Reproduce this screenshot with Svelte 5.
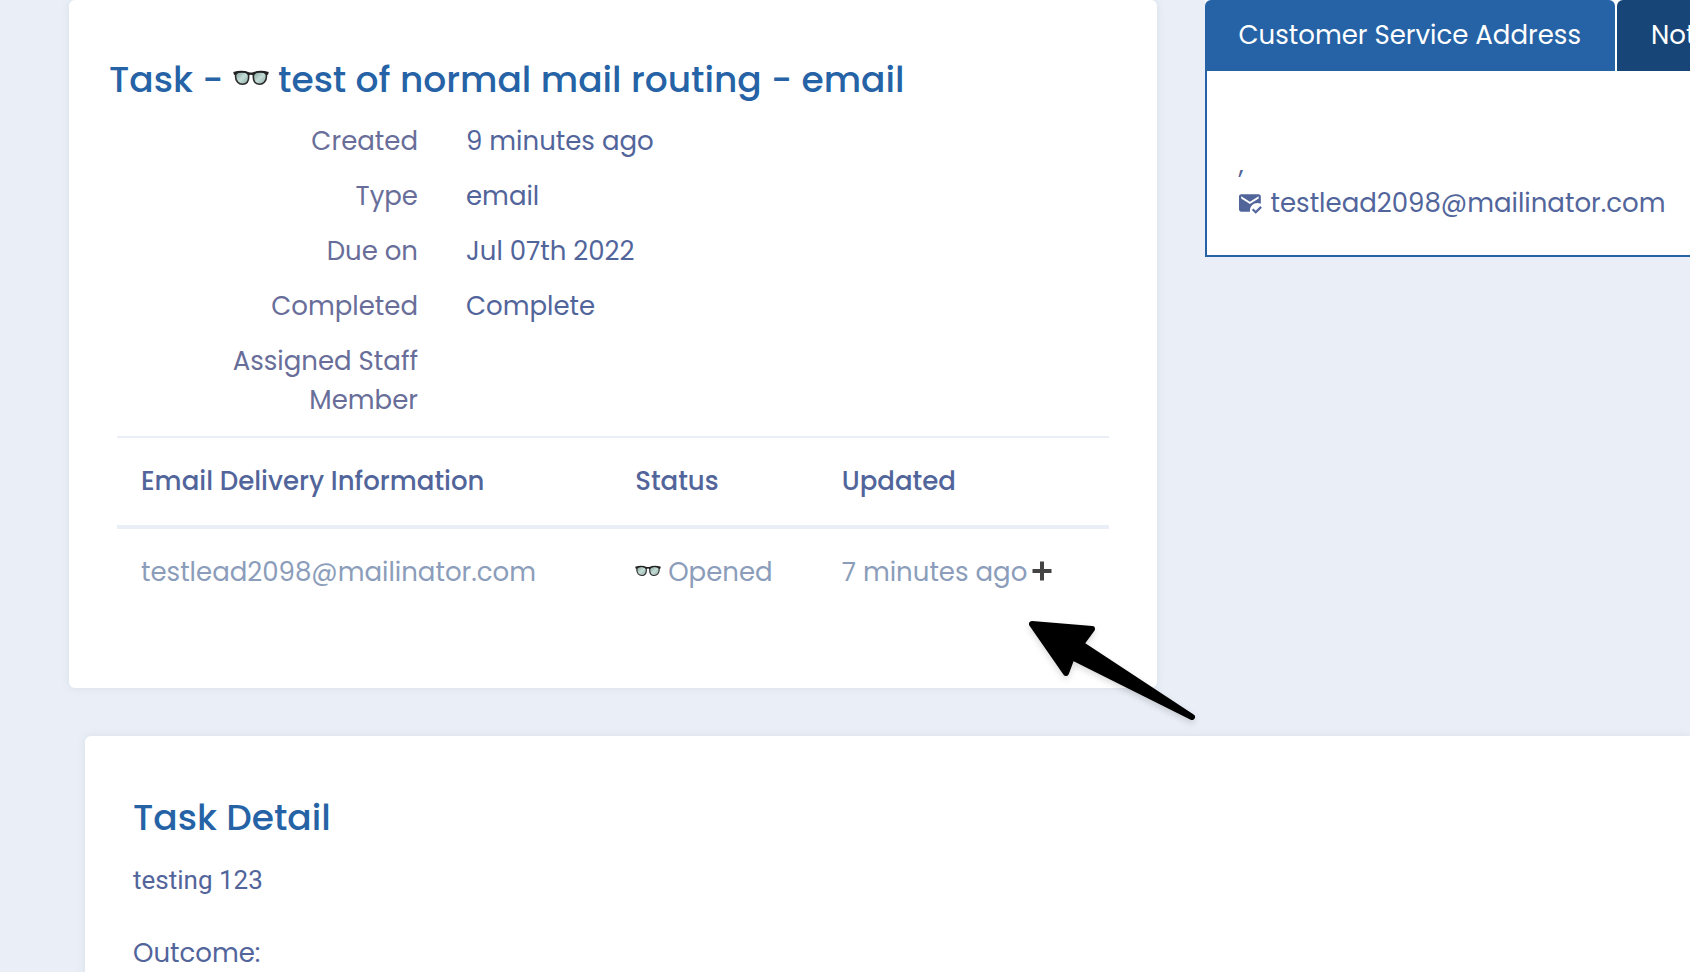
<script>
  const details = [
    { label: 'Created', value: '9 minutes ago' },
    { label: 'Type', value: 'email' },
    { label: 'Due on', value: 'Jul 07th 2022' },
    { label: 'Completed', value: 'Complete' },
    { label: 'Assigned Staff Member', value: '' },
  ];

  const deliveries = [
    { email: 'testlead2098@mailinator.com', status: 'Opened', updated: '7 minutes ago' },
  ];

  const tabs = ['Customer Service Address', 'Notes'];
  let activeTab = $state(0);
</script>

{#snippet glasses()}
  <svg class="glasses" viewBox="0 0 36 16" aria-hidden="true">
    <defs>
      <linearGradient id="lens" x1="0" y1="0" x2="1" y2="1">
        <stop offset="0" stop-color="#7f9f97" />
        <stop offset="0.5" stop-color="#c4dcd5" />
        <stop offset="1" stop-color="#8aaaa2" />
      </linearGradient>
    </defs>
    <path d="M2.500 6C2.500 2.500 5 1.800 9 1.800S15.700 3 15.700 6.500C15.700 11 13.500 14.200 9.500 14.200S2.500 11 2.500 6Z" fill="url(#lens)" stroke="#2b2b2b" stroke-width="1.600" />
    <path d="M33.500 6C33.500 2.500 31 1.800 27 1.800S20.300 3 20.300 6.500C20.300 11 22.500 14.200 26.500 14.200S33.500 11 33.500 6Z" fill="url(#lens)" stroke="#2b2b2b" stroke-width="1.600" />
    <path d="M0.300 2Q9-0.500 16 2.300Q18 2.900 20 2.300Q27-0.500 35.700 2L35.200 4.500L33.600 5.200Q32.500 2.600 27 2.600Q22 2.600 20.300 5.500Q18 3.800 15.700 5.500Q14 2.600 9 2.600Q3.500 2.600 2.400 5.200L0.800 4.500Z" fill="#222" />
  </svg>
{/snippet}

<div class="page">
  <div class="top">
    <section class="card task">
      <h1>Task - {@render glasses()} test of normal mail routing - email</h1>

      <dl>
        {#each details as { label, value }}
          <div class="detail">
            <dt>{label}</dt>
            <dd>{value}</dd>
          </div>
        {/each}
      </dl>

      <table>
        <thead>
          <tr>
            <th class="email">Email Delivery Information</th>
            <th class="status">Status</th>
            <th>Updated</th>
          </tr>
        </thead>
        <tbody>
          {#each deliveries as row}
            <tr>
              <td>{row.email}</td>
              <td><span class="opened">{@render glasses()}{row.status}</span></td>
              <td>
                <span class="updated">
                  {row.updated}
                  <button class="expand" aria-label="Show more">
                    <svg viewBox="0 0 20 20"><path d="M8 0.500h4v7.500h7.500v4h-7.500v7.500h-4v-7.500h-7.500v-4h7.500z" fill="#444" /></svg>
                  </button>
                </span>
              </td>
            </tr>
          {/each}
        </tbody>
      </table>

      <svg class="arrow" viewBox="0 0 176 112" aria-hidden="true">
        <path d="M7 8L67 13L56 28L167 101L47 41L41 57Z" />
      </svg>
    </section>

    <section class="side">
      <div class="tabs" role="tablist">
        {#each tabs as tab, i}
          <button role="tab" class:active={activeTab === i} aria-selected={activeTab === i} onclick={() => (activeTab = i)}>{tab}</button>
        {/each}
      </div>
      <div class="panel">
        <p>&nbsp;</p>
        <p>,</p>
        <p class="contact">
          <svg viewBox="2 2 22 22" aria-hidden="true">
            <path d="M12 19c0-3.870 3.130-7 7-7 1.080 0 2.090.250 3 .680V6c0-1.100-.900-2-2-2H4C2.900 4 2 4.900 2 6v12c0 1.100.900 2 2 2h8.080C12.030 19.670 12 19.340 12 19zM4 6l8 5 8-5v2l-8 5-8-5V6zM17.340 22l-3.540-3.540 1.410-1.410 2.120 2.120 4.240-4.240L23 16.340 17.340 22z" />
          </svg>
          testlead2098@mailinator.com
        </p>
      </div>
    </section>
  </div>

  <section class="card task-detail">
    <h2>Task Detail</h2>
    <p class="note">testing 123</p>
    <p>Outcome:</p>
  </section>
</div>

<style>
  :global(body) {
    overflow: hidden;
    background: #eaeff7;
  }

  .page {
    min-height: 100vh;
    color: #52659b;
    font-family: Poppins, Inter, sans-serif;
    font-size: 26px;
    line-height: 39px;
  }

  .top {
    display: grid;
    grid-template-columns: minmax(0, 56fr) minmax(0, 25fr);
    align-items: start;
    gap: 48px;
    padding-left: 69px;
  }

  .card {
    background: #fff;
    border-radius: 6px;
    box-shadow: 0 0 8px rgba(90, 110, 120, 0.12);
  }

  .task {
    position: relative;
    padding: 56px 48px 72px;
  }

  h1,
  h2 {
    margin: 0;
    color: #2663a6;
    font-size: 36px;
    font-weight: 500;
    line-height: 48px;
  }

  h1 {
    margin-left: -8px;
  }

  h1 .glasses {
    width: 36px;
    height: 16px;
    vertical-align: 6px;
  }

  dl {
    margin: 0;
    padding: 18px 0 16px 24px;
  }

  .detail {
    display: grid;
    grid-template-columns: 277px 1fr;
    gap: 48px;
  }

  .detail + .detail {
    margin-top: 16px;
  }

  dt {
    color: #686e99;
    text-align: right;
  }

  dd {
    margin: 0;
  }

  table {
    width: 100%;
    border-top: 2px solid #eaeff7;
    border-spacing: 0;
    table-layout: fixed;
  }

  th,
  td {
    padding: 24px;
    text-align: left;
    white-space: nowrap;
  }

  th {
    border-bottom: 4px solid #eaeff7;
    font-weight: 500;
  }

  th.email {
    width: 45%;
  }

  th.status {
    width: 16%;
  }

  td {
    color: #8b9dba;
  }

  .opened,
  .updated {
    display: flex;
    align-items: center;
  }

  .opened {
    gap: 7px;
  }

  .opened .glasses {
    width: 26px;
    height: 12px;
    margin-bottom: 4px;
  }

  .updated {
    gap: 5px;
  }

  .expand {
    display: flex;
    margin-bottom: 4px;
    padding: 0;
    border: 0;
    background: none;
    cursor: pointer;
  }

  .expand svg {
    width: 20px;
    height: 20px;
  }

  /* pointer lies over the card's lower right corner */
  .arrow {
    position: absolute;
    right: -44px;
    bottom: -40px;
    width: 176px;
    height: 112px;
    fill: #000;
    stroke: #000;
    stroke-width: 6px;
    stroke-linejoin: round;
    filter: drop-shadow(0 3px 3px rgba(0, 0, 0, 0.15));
  }

  .side {
    overflow: hidden;
  }

  .tabs {
    display: flex;
    gap: 2px;
    background: #fff;
  }

  .tabs button {
    flex: none;
    padding: 16px 34px;
    border: 0;
    border-radius: 6px 6px 0 0;
    background: #184577;
    color: #fff;
    font: inherit;
    cursor: pointer;
  }

  .tabs button.active {
    background: #2663a6;
  }

  .panel {
    padding: 35px 32px 32px;
    border-bottom: 2px solid #2663a6;
    border-left: 2px solid #2663a6;
    background: #fff;
  }

  p {
    margin: 0;
  }

  .contact {
    display: flex;
    align-items: center;
    gap: 8px;
    white-space: nowrap;
  }

  .contact svg {
    flex: none;
    width: 24px;
    height: 24px;
    fill: currentColor;
  }

  .task-detail {
    min-height: 100vh;
    margin: 48px 0 0 85px;
    padding: 58px 48px;
    border-radius: 6px 0 0 6px;
  }

  .note {
    margin: 19px 0 34px;
    font-family: Roboto, sans-serif;
  }
</style>
